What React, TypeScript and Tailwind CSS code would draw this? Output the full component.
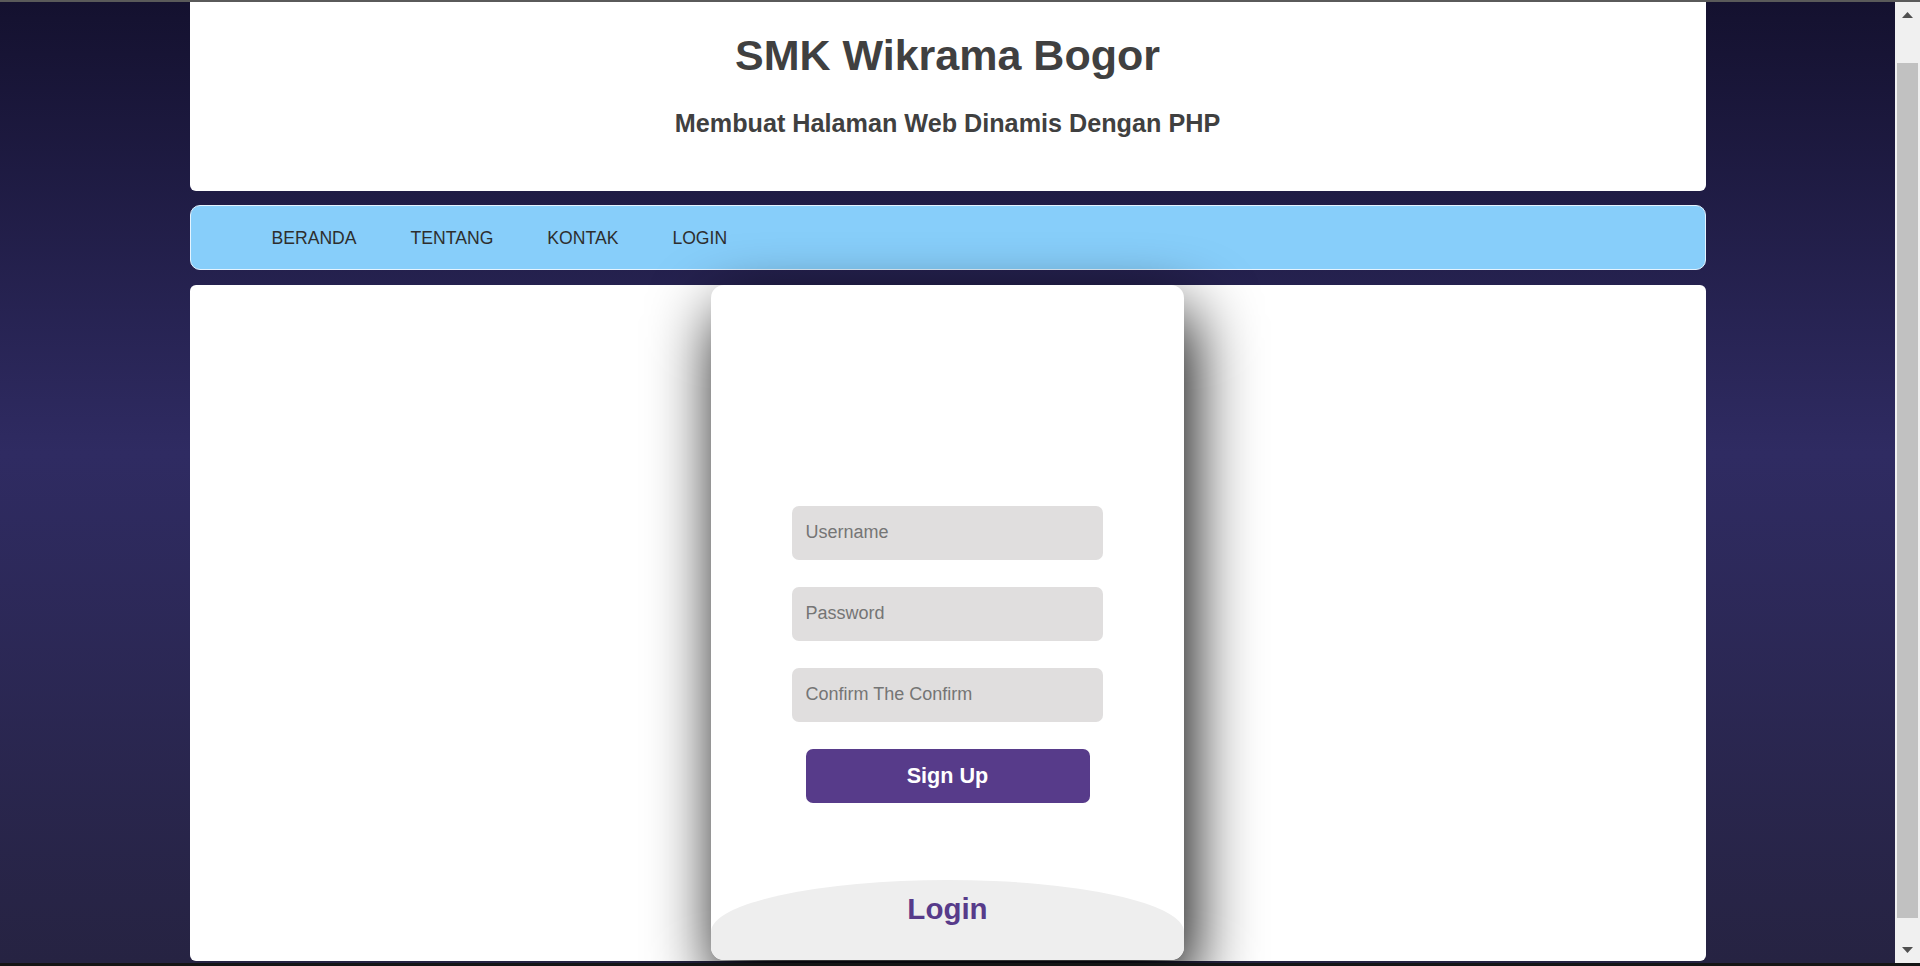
const menu = ['BERANDA', 'TENTANG', 'KONTAK', 'LOGIN']

const fields = ['Username', 'Password', 'Confirm The Confirm']

function Scrollbar() {
  return (
    <div className="w-[25px] shrink-0 bg-[#f0f0f0] flex flex-col items-center">
      <div className="h-[61px] w-full flex justify-center pt-[10px]">
        <svg width="11" height="6" viewBox="0 0 11 6">
          <path d="M5.5 0L11 6H0z" fill="#505050" />
        </svg>
      </div>
      <div className="w-[21px] h-[855px] bg-[#c1c1c1]" />
      <div className="flex-1 w-full flex items-start justify-center pt-[29px]">
        <svg width="11" height="6" viewBox="0 0 11 6">
          <path d="M0 0H11L5.5 6z" fill="#505050" />
        </svg>
      </div>
    </div>
  )
}

function SignupCard() {
  return (
    <div className="w-[473px] h-[675px] bg-white rounded-[13px] overflow-hidden flex flex-col shadow-[7px_27px_67px_#000]">
      {/* sign up part */}
      <div className="h-[595px] shrink-0 pt-[221px] flex flex-col items-center">
        {fields.map((f) => (
          <input
            key={f}
            placeholder={f}
            className="w-[311px] h-[54px] mb-[27px] bg-[#e0dede] rounded-[7px] px-[13.5px] pb-[1px] text-[18px] text-[#333] placeholder:text-[#757575] outline-none border-none"
          />
        ))}
        <button className="w-[284px] h-[54px] bg-[#573b8a] text-white font-bold text-[21.6px] rounded-[7px]">
          Sign Up
        </button>
      </div>
      {/* login part */}
      <div className="h-[621px] shrink-0 bg-[#eeeeee] rounded-[50%/52px] pt-[12px] text-center">
        <span className="text-[29.5px] leading-[34px] font-bold text-[#573b8a]">Login</span>
      </div>
    </div>
  )
}

export default function App() {
  return (
    <div className="h-[966px] w-full overflow-hidden flex flex-col font-['Liberation_Sans',Arial,sans-serif]">
      <div className="h-[2px] shrink-0 bg-[#5a5a5a]" />
      <div className="h-[961px] shrink-0 flex">
        <div className="flex-1 bg-[linear-gradient(to_bottom,#14112f_0%,#2f2b62_47%,#262342_100%)]">
          <div className="w-[80%] mx-auto">
            {/* header */}
            <header className="h-[189px] bg-white rounded-b-[6px] text-center text-[#404040] pt-[28px]">
              <h1 className="text-[43px] leading-[50px] font-bold">SMK Wikrama Bogor</h1>
              <h3 className="mt-[28px] text-[25.2px] leading-[30px] font-bold">
                Membuat Halaman Web Dinamis Dengan PHP
              </h3>
            </header>

            {/* navigation */}
            <nav className="mt-[14px] h-[65px] bg-[#87cefa] border border-[#e4f3fe] rounded-[10px] flex items-center pl-[81px] pt-[2px] gap-[54px]">
              {menu.map((m) => (
                <a key={m} className="text-[17.6px] text-[#2e2e2e]">
                  {m}
                </a>
              ))}
            </nav>

            {/* content */}
            <main className="mt-[15px] h-[676px] bg-white rounded-[6px] flex justify-center">
              <SignupCard />
            </main>
          </div>
        </div>
        <Scrollbar />
      </div>
      <div className="h-[3px] shrink-0 bg-[#151515]" />
    </div>
  )
}
